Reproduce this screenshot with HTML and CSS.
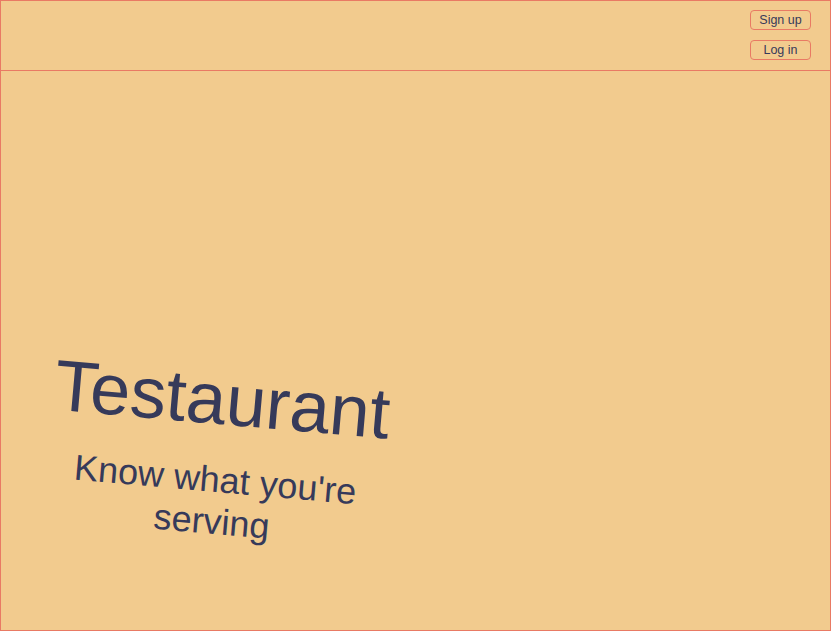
FILE: index.html
```html
<!DOCTYPE html>
<html lang="en">
<head>
<meta charset="utf-8">
<title>Testaurant</title>
<link rel="stylesheet" href="styles.css">
</head>
<body>
<div class="app">
  <header class="topbar">
    <div class="auth">
      <button class="btn">Sign up</button>
      <button class="btn">Log in</button>
    </div>
  </header>
  <main class="main">
    <div class="hero">
      <h1 class="title">Testaurant</h1>
      <p class="tagline">Know what you're serving</p>
    </div>
  </main>
</div>
</body>
</html>
```
FILE: styles.css
```css
html, body {
  margin: 0;
  padding: 0;
  height: 100%;
}
body {
  background: #f2cb8e;
  font-family: "Liberation Sans", Arial, sans-serif;
  color: #363a5a;
}
.app {
  box-sizing: border-box;
  height: 631px;
  border: 1px solid #e97a64;
  display: flex;
  flex-direction: column;
}
.topbar {
  box-sizing: border-box;
  height: 70px;
  border-bottom: 1px solid #e97a64;
  display: flex;
  justify-content: flex-end;
  padding: 9px 19px 0 0;
}
.auth {
  display: flex;
  flex-direction: column;
  gap: 10px;
}
.btn {
  box-sizing: border-box;
  width: 61px;
  height: 20px;
  background: transparent;
  border: 1px solid #e97a64;
  border-radius: 4px;
  font-family: "Liberation Sans", Arial, sans-serif;
  font-size: 12.5px;
  color: #363a5a;
  padding: 0;
  cursor: pointer;
}
.main {
  flex: 1;
  padding: 284px 0 0 37px;
}
.hero {
  width: 360px;
  text-align: center;
  transform: rotate(5deg);
}
.title {
  margin: 0;
  padding-top: 3px;
  font-size: 72px;
  font-weight: normal;
  line-height: 83px;
}
.tagline {
  margin: 18px 0 0;
  font-size: 36px;
  line-height: 42px;
}
```
